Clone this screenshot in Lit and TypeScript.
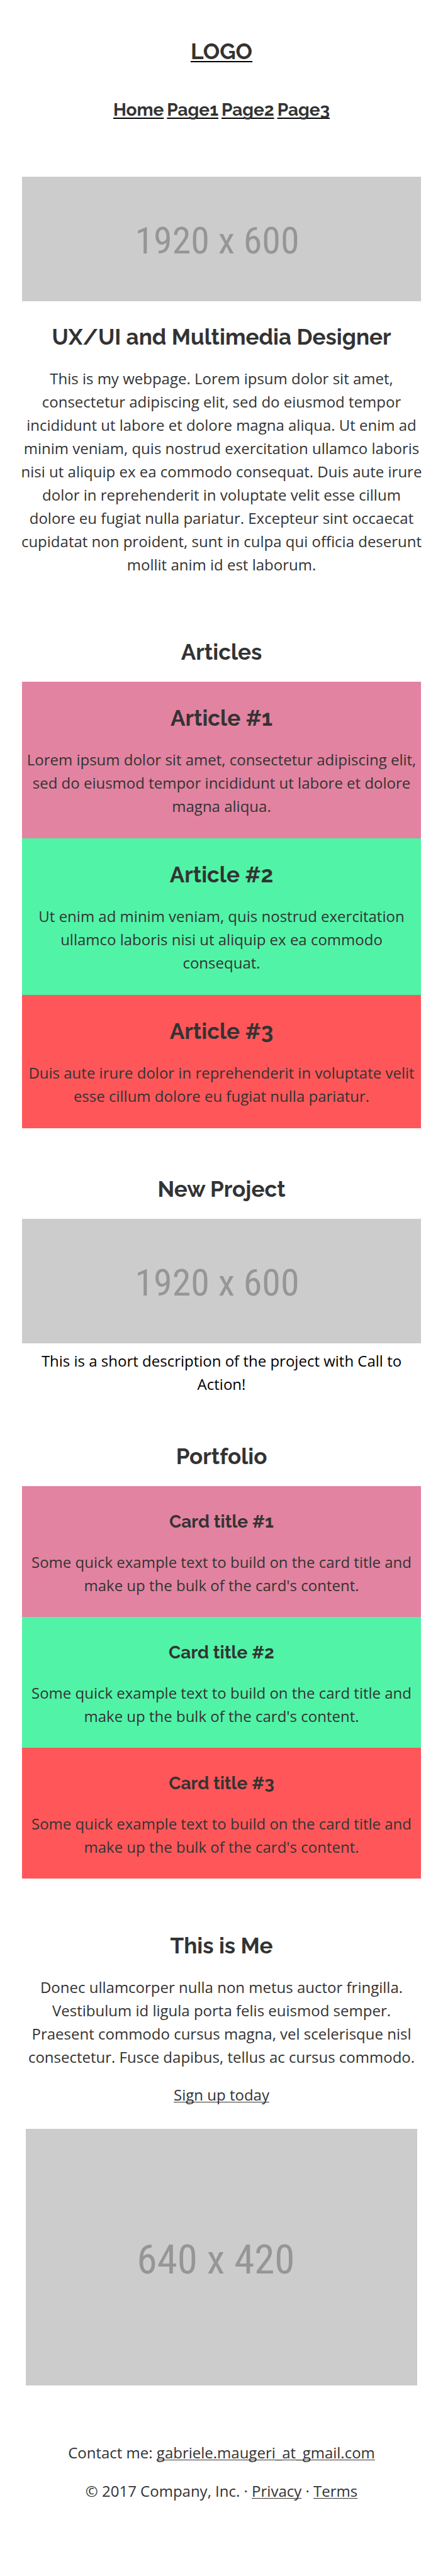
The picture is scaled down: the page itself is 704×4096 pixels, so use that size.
import { LitElement, html, css } from "lit";
import { customElement } from "lit/decorators.js";

interface Entry {
  title: string;
  text: string;
  tone: string;
}

const articles: Entry[] = [
  {
    title: "Article #1",
    text: "Lorem ipsum dolor sit amet, consectetur adipiscing elit, sed do eiusmod tempor incididunt ut labore et dolore magna aliqua.",
    tone: "pink",
  },
  {
    title: "Article #2",
    text: "Ut enim ad minim veniam, quis nostrud exercitation ullamco laboris nisi ut aliquip ex ea commodo consequat.",
    tone: "green",
  },
  {
    title: "Article #3",
    text: "Duis aute irure dolor in reprehenderit in voluptate velit esse cillum dolore eu fugiat nulla pariatur.",
    tone: "red",
  },
];

const cardText =
  "Some quick example text to build on the card title and make up the bulk of the card's content.";

const cards: Entry[] = [
  { title: "Card title #1", text: cardText, tone: "pink" },
  { title: "Card title #2", text: cardText, tone: "green" },
  { title: "Card title #3", text: cardText, tone: "red" },
];

const pages = ["Home", "Page1", "Page2", "Page3"];

@customElement("app-root")
export class AppRoot extends LitElement {
  static styles = css`
    :host {
      display: block;
      background: #fff;
      color: #333;
      font: 24px/37px "Open Sans", "Noto Sans", sans-serif;
      text-align: center;
    }
    h1,
    h2,
    h3,
    h4,
    p,
    figure {
      margin: 0;
    }
    h1,
    h2,
    h3,
    .logo {
      font: 700 35px/42px Raleway, Lato, sans-serif;
    }
    h4,
    .nav {
      font: 700 28px/34px Raleway, Lato, sans-serif;
    }
    a {
      color: #333;
      text-decoration-line: underline;
      text-decoration-thickness: 1px;
      text-underline-offset: 2px;
      text-decoration-skip-ink: none;
    }
    .logo a,
    .nav a {
      text-decoration-color: #000;
      text-decoration-thickness: 2px;
      text-underline-offset: 3px;
    }
    header {
      display: flex;
      flex-direction: column;
      gap: 55px;
      padding: 61px 35px 89px;
    }
    .nav {
      display: flex;
      justify-content: center;
      gap: 5px;
    }
    section {
      display: flex;
      flex-direction: column;
      gap: 26px;
      padding: 0 35px 76px;
    }
    .lead {
      padding: 36px 30px 100px;
    }
    .banner {
      padding: 0 35px;
    }
    .placeholder {
      display: flex;
      align-items: center;
      justify-content: center;
      box-sizing: border-box;
      background: #ccc;
      color: #969696;
      font-family: "Roboto Condensed", "Liberation Sans", sans-serif;
    }
    .wide {
      aspect-ratio: 1920 / 600;
      padding: 4px 14px 0 0;
      font-size: 60px;
    }
    .photo {
      aspect-ratio: 640 / 420;
      padding: 8px 18px 0 0;
      font-size: 65px;
    }
    .block {
      display: flex;
      flex-direction: column;
      gap: 26px;
      padding: 37px 6px 33px;
    }
    .card {
      gap: 28px;
      padding: 40px 6px 32px;
    }
    .pink {
      background: #e283a1;
    }
    .green {
      background: #51f3a7;
    }
    .red {
      background: #ff5759;
    }
    figure {
      display: flex;
      flex-direction: column;
      gap: 9px;
    }
    figcaption {
      color: #000;
    }
    .about {
      padding: 10px 41px 88px;
    }
    .signup {
      margin: -3px 0 10px;
    }
    footer {
      display: flex;
      flex-direction: column;
      gap: 24px;
      padding: 0 35px 115px;
    }
  `;

  render() {
    return html`
      <header>
        <div class="logo"><a href="#">LOGO</a></div>
        <nav class="nav">${pages.map((page) => html`<a href="#">${page}</a>`)}</nav>
      </header>
      <main>
        <div class="banner">
          <div class="placeholder wide">1920 x 600</div>
        </div>
        <section class="lead">
          <h1>UX/UI and Multimedia Designer</h1>
          <p>
            This is my webpage. Lorem ipsum dolor sit amet, consectetur adipiscing elit, sed do
            eiusmod tempor incididunt ut labore et dolore magna aliqua. Ut enim ad minim veniam,
            quis nostrud exercitation ullamco laboris nisi ut aliquip ex ea commodo consequat. Duis
            aute irure dolor in reprehenderit in voluptate velit esse cillum dolore eu fugiat nulla
            pariatur. Excepteur sint occaecat cupidatat non proident, sunt in culpa qui officia
            deserunt mollit anim id est laborum.
          </p>
        </section>
        <section>
          <h2>Articles</h2>
          <div>
            ${articles.map(
              (item) => html`
                <article class="block ${item.tone}">
                  <h3>${item.title}</h3>
                  <p>${item.text}</p>
                </article>
              `
            )}
          </div>
        </section>
        <section>
          <h2>New Project</h2>
          <figure>
            <div class="placeholder wide">1920 x 600</div>
            <figcaption>
              This is a short description of the project with Call to Action!
            </figcaption>
          </figure>
        </section>
        <section>
          <h2>Portfolio</h2>
          <div>
            ${cards.map(
              (item) => html`
                <article class="block card ${item.tone}">
                  <h4>${item.title}</h4>
                  <p>${item.text}</p>
                </article>
              `
            )}
          </div>
        </section>
        <section class="about">
          <h2>This is Me</h2>
          <p>
            Donec ullamcorper nulla non metus auctor fringilla. Vestibulum id ligula porta felis
            euismod semper. Praesent commodo cursus magna, vel scelerisque nisl consectetur. Fusce
            dapibus, tellus ac cursus commodo.
          </p>
          <p class="signup"><a href="#">Sign up today</a></p>
          <div class="placeholder photo">640 x 420</div>
        </section>
      </main>
      <footer>
        <p>Contact me: <a href="#">gabriele.maugeri_at_gmail.com</a></p>
        <p>© 2017 Company, Inc. · <a href="#">Privacy</a> · <a href="#">Terms</a></p>
      </footer>
    `;
  }
}
